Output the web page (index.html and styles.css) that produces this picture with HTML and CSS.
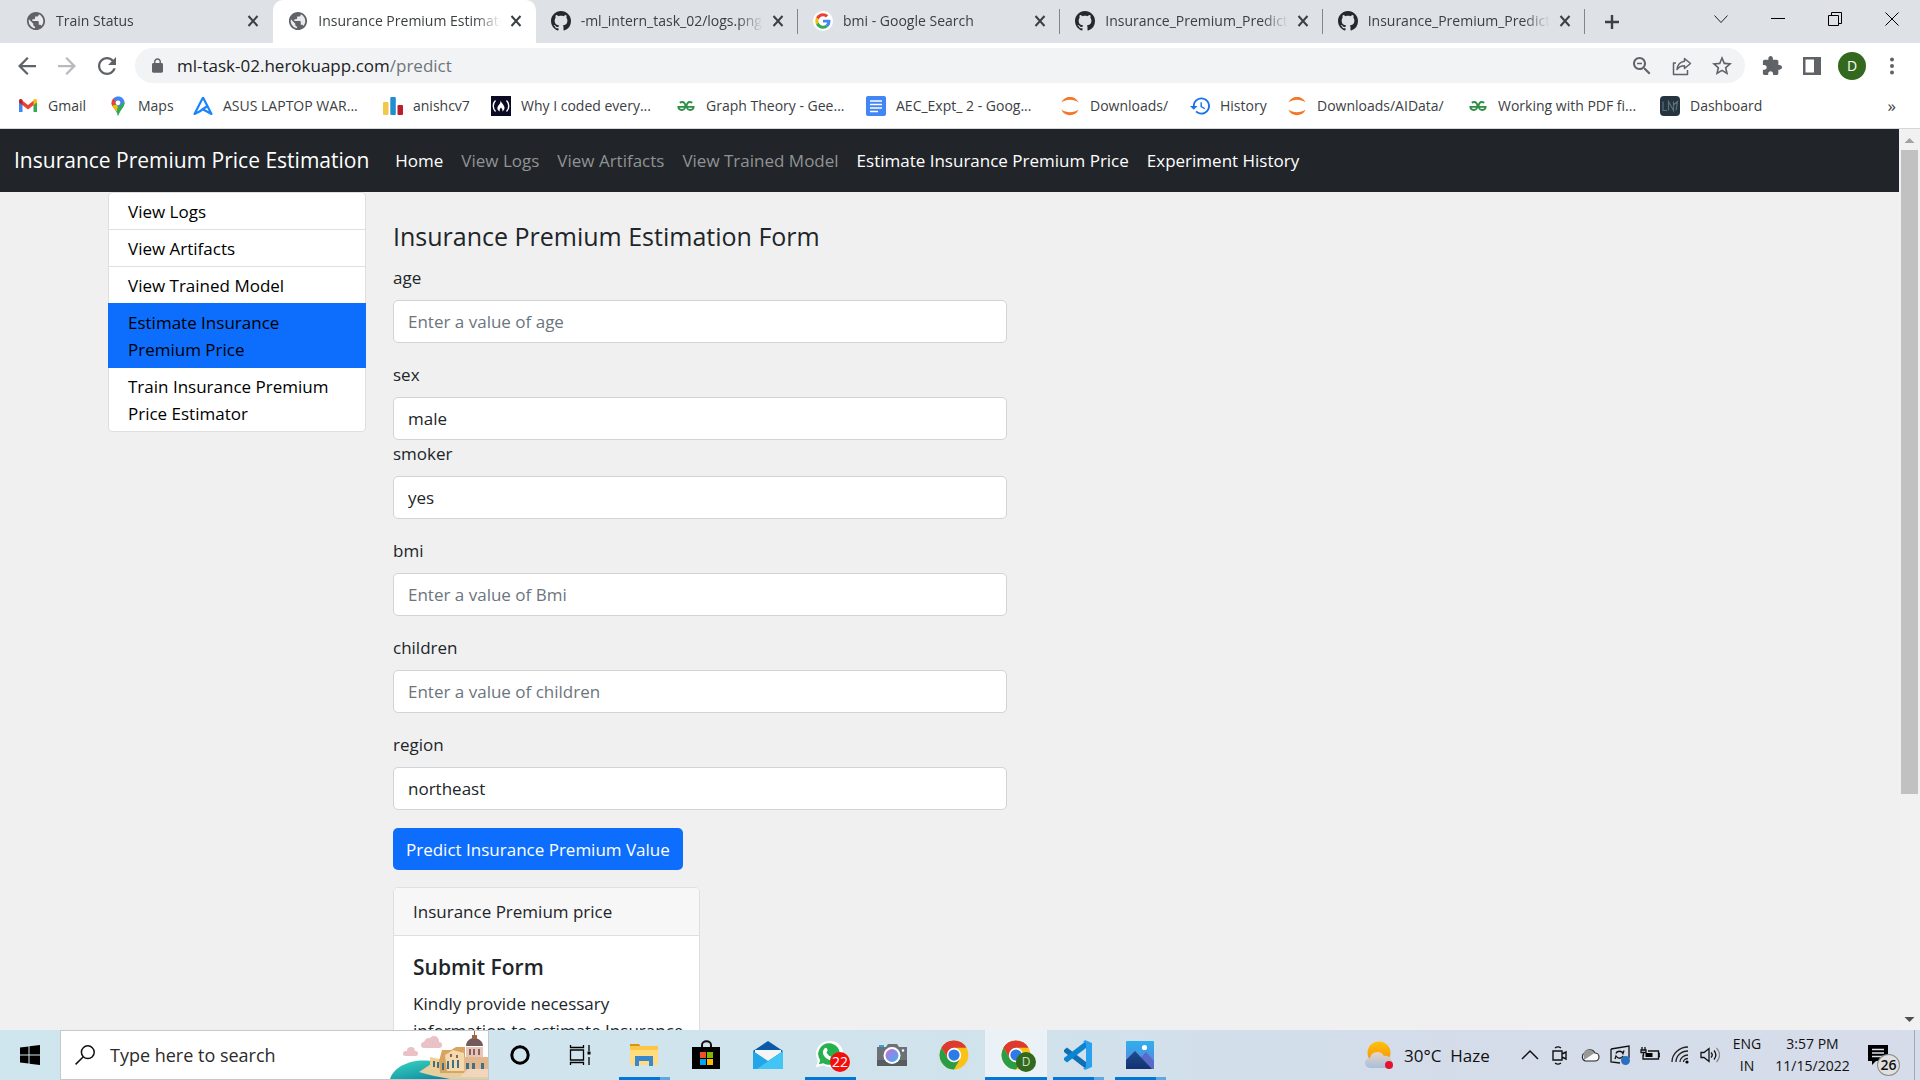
FILE: index.html
```html
<!DOCTYPE html>
<html lang="en">
<head>
<meta charset="utf-8">
<title>Insurance Premium Estimation</title>
<link rel="stylesheet" href="styles.css">
</head>
<body>
<svg class="sprite" aria-hidden="true">
  <defs>
    <linearGradient id="g-sun" x1="0" y1="0" x2="0" y2="1"><stop offset="0" stop-color="#ffc20a"/><stop offset="1" stop-color="#f58a0b"/></linearGradient>
    <linearGradient id="g-cloud" x1="0" y1="0" x2="0" y2="1"><stop offset="0" stop-color="#e9d3c4"/><stop offset="1" stop-color="#a9bfdc"/></linearGradient>
    <linearGradient id="g-lens" x1="0" y1="0" x2="1" y2="1"><stop offset="0" stop-color="#c86be0"/><stop offset="1" stop-color="#3cb4ef"/></linearGradient>
    <linearGradient id="g-sea" x1="0" y1="0" x2="1" y2="1"><stop offset="0" stop-color="#3ad6c0"/><stop offset=".6" stop-color="#1a9eaa"/><stop offset="1" stop-color="#0b5f95"/></linearGradient>
    <linearGradient id="g-photo" x1="0" y1="0" x2="0" y2="1"><stop offset="0" stop-color="#2cb1ee"/><stop offset="1" stop-color="#6a7bd6"/></linearGradient>
    <linearGradient id="g-hill" x1="0" y1="0" x2="0" y2="1"><stop offset="0" stop-color="#1a4f90"/><stop offset="1" stop-color="#163070"/></linearGradient>
  </defs>
  <symbol id="i-globe" viewBox="1 1 22 22"><circle cx="12" cy="12" r="9" fill="#e8eaed"/><path fill="#5f6368" d="M12 2C6.48 2 2 6.48 2 12s4.48 10 10 10 10-4.48 10-10S17.52 2 12 2zm-1 17.93c-3.95-.49-7-3.85-7-7.93 0-.62.08-1.21.21-1.79L9 15v1c0 1.1.9 2 2 2v1.93zm6.900-2.54c-.26-.81-1-1.39-1.900-1.390h-1v-3c0-.55-.45-1-1-1H8v-2h2c.55 0 1-.45 1-1V7h2c1.100 0 2-.9 2-2v-.41c2.930 1.190 5 4.060 5 7.410 0 2.080-.8 3.970-2.100 5.390z"/></symbol>
  <symbol id="i-github" viewBox="0 0 16 16"><path fill="#24292f" d="M8 0C3.58 0 0 3.58 0 8c0 3.54 2.29 6.53 5.47 7.59.4.07.55-.17.55-.38 0-.19-.01-.82-.01-1.49-2.01.37-2.53-.49-2.69-.94-.09-.23-.48-.94-.82-1.13-.28-.15-.68-.52-.01-.53.63-.01 1.08.58 1.23.82.72 1.21 1.87.87 2.33.66.07-.52.28-.87.51-1.07-1.78-.2-3.64-.89-3.64-3.95 0-.87.31-1.59.82-2.15-.08-.2-.36-1.02.08-2.12 0 0 .67-.21 2.2.82.64-.18 1.32-.27 2-.27s1.36.09 2 .27c1.53-1.04 2.2-.82 2.2-.82.44 1.1.16 1.92.08 2.12.51.56.82 1.27.82 2.15 0 3.07-1.87 3.75-3.65 3.95.29.25.54.73.54 1.48 0 1.07-.01 1.93-.01 2.2 0 .21.15.46.55.38A8.01 8.01 0 0016 8c0-4.42-3.58-8-8-8z"/></symbol>
  <symbol id="i-google" viewBox="-7 -7 62 62"><circle cx="24" cy="24" r="31" fill="#fff"/><path fill="#EA4335" d="M24 9.5c3.54 0 6.71 1.22 9.21 3.6l6.85-6.85C35.900 2.380 30.470 0 24 0 14.620 0 6.510 5.380 2.560 13.220l7.980 6.190C12.430 13.720 17.740 9.500 24 9.500z"/><path fill="#4285F4" d="M46.980 24.550c0-1.570-.15-3.090-.38-4.550H24v9.020h12.940c-.58 2.960-2.260 5.480-4.780 7.180l7.730 6c4.510-4.180 7.090-10.360 7.090-17.650z"/><path fill="#FBBC05" d="M10.530 28.590c-.48-1.450-.76-2.990-.76-4.590s.27-3.140.76-4.590l-7.980-6.190C.92 16.460 0 20.120 0 24c0 3.880.92 7.540 2.560 10.780l7.970-6.190z"/><path fill="#34A853" d="M24 48c6.480 0 11.930-2.130 15.890-5.810l-7.730-6c-2.150 1.450-4.920 2.300-8.160 2.300-6.260 0-11.570-4.220-13.470-9.910l-7.980 6.190C6.510 42.620 14.620 48 24 48z"/></symbol>
  <symbol id="i-x" viewBox="0 0 12 12"><path d="M1.500 1l9 10M10.500 1l-9 10" stroke="#3c4043" stroke-width="2" fill="none"/></symbol>
  <symbol id="i-back" viewBox="4 4 16 16"><path fill="currentColor" d="M20 11H7.830l5.590-5.590L12 4l-8 8 8 8 1.410-1.410L7.830 13H20v-2z"/></symbol>
  <symbol id="i-jupyter" viewBox="0 0 20 20"><path fill="#f37726" d="M1.500 6.500C4-1 16-1 18.500 6.500 14 2.800 6 2.800 1.500 6.500zM1.500 13.500C4 21 16 21 18.500 13.500 14 17.200 6 17.200 1.500 13.500z"/></symbol>
  <symbol id="i-gfg" viewBox="0 0 20 12"><path fill="none" stroke="#2f8d46" stroke-width="2" d="M3 2.500c5-3 7 2 6 5-1 4-7 4-7.500-.5h17c-.5 4.500-6.500 4.500-7.500.5-1-3 1-8 6-5"/></symbol>
  <symbol id="i-chrome" viewBox="0 0 48 48"><circle cx="24" cy="24" r="23" fill="#fbc116"/><path fill="#dd3b2e" d="M4.080 12.500A23 23 0 0 1 43.920 12.500H24L14 30z"/><path fill="#2a9e47" d="M4.080 12.500A23 23 0 0 0 24 47l10-17.250A11.500 11.500 0 0 1 14 29.750z"/><path fill="#dd3b2e" d="M24 12.500h20H24a11.500 11.500 0 0 0-10 5.750L4.080 12.500A23 23 0 0 1 24 1z"/><circle cx="24" cy="24" r="11.500" fill="#fff"/><circle cx="24" cy="24" r="9" fill="#2d7be8"/></symbol>
</svg>

<div class="screen">
  <header class="browser">
    <div class="tabstrip">
      <div class="tabs" role="tablist">
        <div class="tab" role="tab"><svg class="favicon"><use href="#i-globe"/></svg><span class="tab-title">Train Status</span><button class="tab-close" aria-label="Close tab"><svg><use href="#i-x"/></svg></button></div>
        <div class="tab active" role="tab" aria-selected="true"><svg class="favicon"><use href="#i-globe"/></svg><span class="tab-title">Insurance Premium Estimation</span><button class="tab-close" aria-label="Close tab"><svg><use href="#i-x"/></svg></button></div>
        <div class="tab divided" role="tab"><svg class="favicon"><use href="#i-github"/></svg><span class="tab-title">-ml_intern_task_02/logs.png at main</span><button class="tab-close" aria-label="Close tab"><svg><use href="#i-x"/></svg></button></div>
        <div class="tab divided" role="tab"><svg class="favicon"><use href="#i-google"/></svg><span class="tab-title">bmi - Google Search</span><button class="tab-close" aria-label="Close tab"><svg><use href="#i-x"/></svg></button></div>
        <div class="tab divided" role="tab"><svg class="favicon"><use href="#i-github"/></svg><span class="tab-title">Insurance_Premium_Prediction</span><button class="tab-close" aria-label="Close tab"><svg><use href="#i-x"/></svg></button></div>
        <div class="tab divided" role="tab"><svg class="favicon"><use href="#i-github"/></svg><span class="tab-title">Insurance_Premium_Prediction</span><button class="tab-close" aria-label="Close tab"><svg><use href="#i-x"/></svg></button></div>
      </div>
      <button class="new-tab" aria-label="New tab"><svg viewBox="0 0 16 16"><path d="M8 1v14M1 8h14" stroke="#3c4043" stroke-width="2.400"/></svg></button>
      <div class="window-controls">
        <button aria-label="Search tabs"><svg viewBox="0 0 14 14"><path d="M.5 3.500l6.500 7 6.500-7" fill="none" stroke="#222"/></svg></button>
        <button aria-label="Minimize"><svg viewBox="0 0 14 14"><path d="M0 6.500h14" stroke="#000"/></svg></button>
        <button aria-label="Restore"><svg viewBox="0 0 14 14"><path d="M.5 3.500h10v10H.5zM3.500 3V.5h10v11h-3" fill="none" stroke="#000"/></svg></button>
        <button aria-label="Close"><svg viewBox="0 0 14 14"><path d="M.5.5l13 13M13.500.5l-13 13" stroke="#000"/></svg></button>
      </div>
    </div>

    <div class="toolbar">
      <div class="nav-buttons">
        <button aria-label="Back"><svg viewBox="0 0 16 16"><use href="#i-back"/></svg></button>
        <button class="forward" aria-label="Forward" disabled><svg viewBox="0 0 16 16"><g transform="translate(16 0) scale(-1 1)"><use href="#i-back" width="16" height="16"/></g></svg></button>
        <button aria-label="Reload"><svg viewBox="4 4 16 16"><path fill="currentColor" d="M17.650 6.350C16.200 4.900 14.210 4 12 4c-4.420 0-7.990 3.580-7.990 8s3.570 8 7.990 8c3.730 0 6.840-2.550 7.730-6h-2.080c-.82 2.330-3.040 4-5.650 4-3.310 0-6-2.690-6-6s2.690-6 6-6c1.660 0 3.140.69 4.220 1.780L13 11h7V4l-2.350 2.350z"/></svg></button>
      </div>
      <div class="omnibox">
        <svg class="lock" viewBox="4 1 16 21"><path fill="#5f6368" d="M18 8h-1V6c0-2.760-2.240-5-5-5S7 3.240 7 6v2H6c-1.100 0-2 .9-2 2v10c0 1.100.9 2 2 2h12c1.100 0 2-.9 2-2V10c0-1.100-.9-2-2-2zM9 6c0-1.660 1.340-3 3-3s3 1.340 3 3v2H9V6z"/></svg>
        <div class="url" role="textbox" aria-label="Address and search bar" contenteditable="true" spellcheck="false">ml-task-02.herokuapp.com<span>/predict</span></div>
        <div class="omni-actions">
          <button aria-label="Zoom"><svg viewBox="2 2 20 20"><path fill="#5f6368" d="M15.500 14h-.79l-.28-.27C15.410 12.590 16 11.110 16 9.500 16 5.910 13.090 3 9.500 3S3 5.910 3 9.500 5.910 16 9.500 16c1.610 0 3.090-.59 4.230-1.570l.27.28v.79l5 4.990L20.490 19l-4.990-5zm-6 0C7.010 14 5 11.990 5 9.500S7.010 5 9.500 5 14 7.010 14 9.500 11.990 14 9.500 14zM7 8.800h5v1.400H7z"/></svg></button>
          <button aria-label="Share"><svg viewBox="0 0 20 20"><path fill="none" stroke="#5f6368" stroke-width="1.500" stroke-linejoin="round" d="M4 7H1.500v11.500h14V14M12.500 2.500l6 5-6 5V9.800c-3.500 0-5.500 1-7.500 3.700.6-4.800 3-7.600 7.500-8.200z"/></svg></button>
          <button aria-label="Bookmark this tab"><svg viewBox="2 2 20 20"><path fill="#5f6368" d="M22 9.240l-7.190-.62L12 2 9.190 8.630 2 9.240l5.460 4.730L5.820 21 12 17.270 18.180 21l-1.630-7.030L22 9.240zM12 15.400l-3.760 2.270 1-4.280-3.320-2.880 4.380-.38L12 6.100l1.710 4.040 4.380.38-3.320 2.880 1 4.280L12 15.400z"/></svg></button>
        </div>
      </div>
      <div class="tool-actions">
        <button aria-label="Extensions"><svg viewBox="1 1 22 22"><path fill="#5f6368" d="M20.500 11H19V7c0-1.100-.9-2-2-2h-4V3.500C13 2.120 11.880 1 10.500 1S8 2.120 8 3.500V5H4c-1.100 0-1.990.9-1.990 2v3.800H3.500c1.490 0 2.700 1.210 2.700 2.700s-1.210 2.700-2.700 2.700H2V20c0 1.100.9 2 2 2h3.800v-1.500c0-1.490 1.210-2.700 2.700-2.700 1.490 0 2.700 1.210 2.700 2.700V22H17c1.100 0 2-.9 2-2v-4h1.500c1.380 0 2.500-1.120 2.500-2.500S21.880 11 20.500 11z"/></svg></button>
        <button aria-label="Side panel"><svg viewBox="0 0 20 20"><path fill="#5f6368" fill-rule="evenodd" d="M1 1h18v18H1zM3.500 3.500v13H12v-13z"/></svg></button>
        <button class="avatar" aria-label="Profile">D</button>
        <button aria-label="Menu"><svg viewBox="0 0 20 20"><g fill="#5f6368"><circle cx="10" cy="3.500" r="2"/><circle cx="10" cy="10" r="2"/><circle cx="10" cy="16.500" r="2"/></g></svg></button>
      </div>
    </div>

    <nav class="bookmarks" aria-label="Bookmarks">
      <a href="#"><svg viewBox="0 0 20 20"><path fill="#4285f4" d="M1 5v11h3.500V8z"/><path fill="#34a853" d="M15.500 8v8H19V5z"/><path fill="#ea4335" d="M3 3.500l7 5.500 7-5.500V8l-7 5.500L3 8z"/><path fill="#c5221f" d="M1 5c0-2 2-2.500 3.500-1.200V9L1 6.500z"/><path fill="#fbbc04" d="M19 5c0-2-2-2.500-3.500-1.200V9L19 6.500z"/></svg>Gmail</a>
      <a href="#"><svg viewBox="0 0 20 20"><path fill="#34a853" d="M3.500 7c0 4 5 6.500 6.500 13C11.500 14 16.500 11 16.500 7z"/><path fill="#fbbc04" d="M4 9c1 2.500 3 4 4.500 6.500L14 9z"/><path fill="#ea4335" d="M3.500 7c0-2 .8-3.700 2-4.800L10 6 4.300 10z"/><path fill="#4285f4" d="M5.500 2.200C9 -1 15.500 0 16.500 6L10 13 9 7z"/><path fill="#34a853" d="M16.400 5.500c.8 5-4 8-6.400 14.500L9 13z"/><circle cx="10" cy="6.800" r="2.400" fill="#fff"/></svg>Maps</a>
      <a href="#"><svg viewBox="0 0 20 20"><path fill="none" stroke="#1a84ff" stroke-width="2.200" stroke-linejoin="round" d="M10 1.500L1.500 18l5-2.500 8-5.500M10 1.500L18.500 18l-5.500-3-4-2"/></svg>ASUS LAPTOP WAR...</a>
      <a href="#"><svg viewBox="0 0 20 20"><rect y="6" width="5.500" height="13" rx="1" fill="#f2c84b"/><rect x="7.300" y="1" width="5.500" height="18" rx="1" fill="#1f8fce"/><rect x="14.500" y="9" width="5.500" height="10" rx="1" fill="#bb1f2d"/></svg>anishcv7</a>
      <a href="#"><svg viewBox="0 0 20 20"><path fill="#0a0a23" d="M0 0h20v20H0z"/><path fill="none" stroke="#fff" stroke-width="1.400" d="M4.500 4.500c-3 3-3 8 0 11M15.500 4.500c3 3 3 8 0 11"/><path fill="#fff" d="M9.500 4.500c1.500 3.500 4 4.500 4 7.500 0 2-1.300 3-2.300 3.500 1-2-.4-2.500-1.200-4-.8 1-2 2.300-1 4C5.500 14 6 11 7.800 9c1.200-1.400 1.900-2.700 1.700-4.500z"/></svg>Why I coded every...</a>
      <a href="#"><svg viewBox="0 0 20 20"><use href="#i-gfg" x="1" y="4" width="18" height="12"/></svg>Graph Theory - Gee...</a>
      <a href="#"><svg viewBox="0 0 20 20"><rect width="20" height="20" rx="2" fill="#4285f4"/><path stroke="#fff" stroke-width="1.600" d="M4 5h12M4 8.500h12M4 12h12M4 15.500h8"/></svg>AEC_Expt_ 2 - Goog...</a>
      <a href="#"><svg viewBox="0 0 20 20"><use href="#i-jupyter"/></svg>Downloads/</a>
      <a href="#"><svg viewBox="1 2 21 20"><path fill="#1a73e8" d="M13 3c-4.970 0-9 4.030-9 9H1l3.890 3.890.07.14L9 12H6c0-3.870 3.130-7 7-7s7 3.130 7 7-3.130 7-7 7c-1.930 0-3.680-.79-4.940-2.060l-1.420 1.420C8.270 19.990 10.510 21 13 21c4.970 0 9-4.030 9-9s-4.030-9-9-9zm-1 5v5l4.280 2.540.72-1.210-3.500-2.080V8H12z"/></svg>History</a>
      <a href="#"><svg viewBox="0 0 20 20"><use href="#i-jupyter"/></svg>Downloads/AIData/</a>
      <a href="#"><svg viewBox="0 0 20 20"><use href="#i-gfg" x="1" y="4" width="18" height="12"/></svg>Working with PDF fi...</a>
      <a href="#"><svg viewBox="0 0 20 20"><rect width="20" height="20" rx="4" fill="#25343f"/><path fill="none" stroke="#5c707d" stroke-width="1.200" d="M3 5.500v9h4M8.500 14.500v-9l5 9v-9M13.500 9l4-3.500-1.500 9"/></svg>Dashboard</a>
      <button class="overflow" aria-label="More bookmarks">»</button>
    </nav>
  </header>

  <div class="viewport">
    <div class="page">
      <nav class="navbar">
        <a class="brand" href="#">Insurance Premium Price Estimation</a>
        <a class="on" href="#">Home</a>
        <a href="#">View Logs</a>
        <a href="#">View Artifacts</a>
        <a href="#">View Trained Model</a>
        <a class="on" href="#">Estimate Insurance Premium Price</a>
        <a class="on" href="#">Experiment History</a>
      </nav>
      <div class="container">
        <aside class="list">
          <a href="#">View Logs</a>
          <a href="#">View Artifacts</a>
          <a href="#">View Trained Model</a>
          <a class="current" href="#">Estimate Insurance Premium Price</a>
          <a href="#">Train Insurance Premium Price Estimator</a>
        </aside>
        <main class="content">
          <h1>Insurance Premium Estimation Form</h1>
          <form>
            <div class="field"><label for="age">age</label><input id="age" type="text" placeholder="Enter a value of age"></div>
            <div class="field tight"><label for="sex">sex</label><select id="sex"><option>male</option><option>female</option></select></div>
            <div class="field"><label for="smoker">smoker</label><select id="smoker"><option>yes</option><option>no</option></select></div>
            <div class="field"><label for="bmi">bmi</label><input id="bmi" type="text" placeholder="Enter a value of Bmi"></div>
            <div class="field"><label for="children">children</label><input id="children" type="text" placeholder="Enter a value of children"></div>
            <div class="field"><label for="region">region</label><select id="region"><option>northeast</option><option>northwest</option><option>southeast</option><option>southwest</option></select></div>
            <button class="submit" type="submit">Predict Insurance Premium Value</button>
          </form>
          <section class="card">
            <div class="card-header">Insurance Premium price</div>
            <div class="card-body">
              <h2>Submit Form</h2>
              <p>Kindly provide necessary information to estimate Insurance Premium price.</p>
            </div>
          </section>
        </main>
      </div>
    </div>
    <div class="scrollbar" aria-hidden="true">
      <svg viewBox="0 0 21 21"><path fill="#a3a3a3" d="M10.500 9l5 5h-10z"/></svg>
      <div class="track"><div class="thumb"></div></div>
      <svg viewBox="0 0 21 21"><path fill="#505050" d="M10.500 13l5-5h-10z"/></svg>
    </div>
  </div>

  <footer class="taskbar">
    <button class="start" aria-label="Start"><svg viewBox="0 0 20 20"><path d="M0 2.600l8.500-1.200v8.100H0zM9.500 1.300L20 0v9.500H9.500zM0 10.500h8.500v8.100L0 17.400zM9.500 10.500H20V20L9.500 18.700z"/></svg></button>
    <div class="search">
      <svg class="glass" viewBox="0 0 20 20"><circle cx="12.800" cy="7.200" r="6.400" fill="none" stroke="#111" stroke-width="1.500"/><path d="M8.300 11.700L.6 19.400" stroke="#111" stroke-width="1.500"/></svg>
      <input type="text" aria-label="Type here to search" placeholder="Type here to search">
      <svg class="scene" viewBox="0 0 98 48">
        <g fill="#e9c1c6"><circle cx="39" cy="12" r="5"/><circle cx="44" cy="10" r="5"/><rect x="31" y="11" width="21" height="6" rx="3"/><circle cx="21" cy="20" r="4"/><rect x="13" y="20" width="15" height="5" rx="2.500"/></g>
        <path fill="url(#g-sea)" d="M0 48C4 34 26 26 45 31l40 12v5z"/>
        <path fill="#e5cf9f" d="M29 41l12-8 57 4v11H60c-10-2-22-4-31-7z"/>
        <path fill="#efd08e" d="M40 38V26l14 3v11z"/>
        <path fill="#d9a45f" d="M49 30l3-11h9l5-3h9v26H50z"/>
        <path fill="#f4d9ac" d="M55 24l8-5 11 3v18H57z"/>
        <path fill="#e8c6b7" d="M76 16h17v27H76z"/><path fill="#e2b78d" d="M74 26h24v16H74z"/><path fill="#f0d6bc" d="M78 38h20v8H70z"/>
        <path fill="#735b5b" d="M76 15c0-5 4-8 8-8s9 3 9 8z"/><path fill="#9a654a" d="M82 4h5v4h-5zM84 0h1v5h-1z"/>
        <g fill="#3d718a"><path d="M43 30h2v6h-2zM47 31h2v6h-2zM52 32h2v7h-2zM57 30h2v8h-2zM62 29h2v8h-2zM67 29h2v8h-2zM76 32h3v6h-3zM82 32h3v6h-3zM91 32h3v6h-3z"/></g>
        <g fill="#8a5f5f"><path d="M79 18h2v6h-2zM83 18h2v6h-2zM88 18h2v6h-2zM60 23h2v3h-2zM66 24h2v3h-2z"/></g>
      </svg>
    </div>
    <div class="apps">
      <button aria-label="Cortana"><svg viewBox="0 0 30 30"><circle cx="15" cy="15" r="8.200" fill="none" stroke="#000" stroke-width="3"/></svg></button>
      <button aria-label="Task View"><svg viewBox="0 0 30 30"><path fill="none" stroke="#000" stroke-width="1.300" d="M3.500 10h13v10h-13zM3.500 5v2.500h13V5M3.500 25v-2.500h13V25M22 5v6M22 17v8"/><path d="M20.500 11.500h3v3h-3z"/></svg></button>
      <button class="running stacked" aria-label="File Explorer"><svg viewBox="0 0 30 30"><path fill="#d9940f" d="M1 4h9l2 3H1z"/><path fill="#fbc745" d="M1 6h28v19H1z"/><path fill="#ffdc7e" d="M1 10h28v15H1z"/><path fill="#3a86cf" d="M6 16h18v10h-4v-5H10v5H6z"/></svg></button>
      <button aria-label="Microsoft Store"><svg viewBox="0 0 30 30"><path fill="none" stroke="#111" stroke-width="2" d="M11 9V5c0-5 9-5 9 0v4"/><path fill="#000" d="M1 7h28v22H1z"/><path fill="#f25022" d="M9 12h6v6H9z"/><path fill="#7fba00" d="M16 12h6v6h-6z"/><path fill="#00a4ef" d="M9 19h6v6H9z"/><path fill="#ffb900" d="M16 19h6v6h-6z"/></svg></button>
      <button aria-label="Mail"><svg viewBox="0 0 30 30"><path fill="#0a5aa8" d="M0 11L15 1l15 10-3 5H3z"/><path fill="#f5f5f5" d="M2 10h26v3L15 21 2 14z"/><path fill="#22a6e8" d="M0 11l15 10 15-10v18H0z"/><path fill="#42c4f5" d="M30 11L4 29h26z"/></svg></button>
      <button class="running" aria-label="WhatsApp"><svg viewBox="0 0 32 32"><path fill="#fff" d="M15 1a14 14 0 0 0-12 21L1 29l8-2A14 14 0 1 0 15 1z"/><path fill="#25b14c" d="M15 3.500A11.500 11.500 0 0 0 5.500 21.500l-1.300 4.400 4.600-1.200A11.500 11.500 0 1 0 15 3.500z"/><path fill="#fff" d="M10 9c2-2 3 0 3.500 2 0 1-1.500 1.500-1 2.500 1 2 2.500 3.500 4.500 4l-1 4c-6-2-10-8-6-12.500z"/></svg><span class="count">22</span></button>
      <button aria-label="Camera"><svg viewBox="0 0 30 30"><path fill="#2ea3df" d="M2 5h5v3H2z"/><path fill="#6b7177" d="M0 7h9l2-3h9l2 3h8v19H0z"/><path fill="#575c61" d="M0 20h30v6H0z"/><circle cx="15" cy="15.500" r="8.500" fill="#fff"/><circle cx="15" cy="15.500" r="6.500" fill="url(#g-lens)"/><circle cx="26" cy="10.500" r="1.200" fill="#fff"/></svg></button>
      <button aria-label="Google Chrome"><svg><use href="#i-chrome"/></svg></button>
      <button class="running focused" aria-label="Google Chrome, profile D"><svg><use href="#i-chrome"/></svg><span class="count profile">D</span></button>
      <button class="running stacked" aria-label="Visual Studio Code"><svg viewBox="0 0 30 30"><path fill="#0f6fb4" d="M1 10l3-2.500L23 22v7L1 12z"/><path fill="#0b85cf" d="M1 20l3 2.500L23 8V1L1 18z"/><path fill="#2ba0ee" d="M22 0l7 3v24l-7 3-2-2 3-1V3l-3-1z"/></svg></button>
      <button class="running stacked" aria-label="Photos"><svg viewBox="0 0 30 30"><rect x="1" y="1" width="28" height="28" rx="1" fill="url(#g-photo)"/><path fill="#5b6ac9" d="M14 20l7-8 8 9v8H14z"/><path fill="url(#g-hill)" d="M1 20l9-9 17 18H1z"/><circle cx="19.500" cy="7.500" r="2.600" fill="#fff"/></svg></button>
    </div>
    <div class="tray">
      <button class="weather"><svg viewBox="0 0 28 28"><circle cx="14" cy="12" r="11.500" fill="url(#g-sun)"/><path fill="url(#g-cloud)" d="M5 27a5 5 0 0 1 0-10 7.500 7.500 0 0 1 14-2 6 6 0 0 1 3 12z"/><circle cx="24" cy="24" r="4" fill="#e5112f"/></svg>30°C&nbsp; Haze</button>
      <div class="tray-icons">
        <button aria-label="Show hidden icons"><svg viewBox="0 0 20 20"><path fill="none" stroke="#111" stroke-width="1.500" d="M2 14l8-8 8 8"/></svg></button>
        <button aria-label="Meet Now"><svg viewBox="0 0 20 20"><path fill="none" stroke="#111" stroke-width="1.400" d="M3 6h9v9H3zM12 9l4-2v7l-4-2M5 3c2-1.500 4-1.500 6 0M5 18c2 1.500 4 1.500 6 0"/></svg></button>
        <button aria-label="OneDrive"><svg viewBox="0 0 20 20"><path fill="#fafafa" stroke="#222" stroke-width="1.100" d="M5 16a4.500 4.500 0 0 1-.5-8A6 6 0 0 1 15 8a4 4 0 0 1 0 8z"/><path fill="#989898" d="M3.500 8.500A6 6 0 0 1 14.500 8L4 15z"/></svg></button>
        <button aria-label="Update status"><svg viewBox="0 0 20 20"><path fill="none" stroke="#111" stroke-width="1.300" d="M1 4l18-3v12M1 4v13l9 1M6 8.500c1-3 6-3 7 0l1-3M13 11c-1 3-5 3-7 0l-1 3"/><circle cx="15.500" cy="15.500" r="4.500" fill="#2b6fbf"/></svg></button>
        <button aria-label="Battery"><svg viewBox="0 0 20 20"><path fill="none" stroke="#111" stroke-width="1.300" d="M3 9.500V14h15.500V6H8M18.500 8.500H20v3h-1.500M2 2v3M5 2v3M1 5h5v2.500H1zM3.500 7.500v4"/><path d="M5.500 8h7v4h-7z"/></svg></button>
        <button aria-label="Network"><svg viewBox="0 0 20 20"><path fill="none" stroke="#222" stroke-width="1.300" d="M2 17C2 9 9 2 18 2M6 17C6 11 11 6 18 6M10 17c0-4 4-7 8-7"/><path fill="none" stroke="#222" stroke-width="1.300" d="M13.500 17c0-2 2-3.500 4.500-3.500"/><circle cx="17" cy="17" r="1.600"/></svg></button>
        <button aria-label="Volume"><svg viewBox="0 0 20 20"><path fill="none" stroke="#111" stroke-width="1.300" d="M1 7.500h3l5-4v13l-5-4H1zM11 7.500c1.500 1.500 1.500 3.500 0 5M14 5.500c2.500 3 2.500 6 0 9"/><path fill="none" stroke="#888" stroke-width="1.200" d="M16.500 3c4 4.500 4 9.500 0 14"/></svg></button>
      </div>
      <button class="stack lang"><span>ENG</span><span>IN</span></button>
      <button class="stack clock"><span>3:57 PM</span><span>11/15/2022</span></button>
      <button class="notes" aria-label="Notifications"><svg viewBox="0 0 20 20"><path d="M0 0h20v16H8l-4 4v-4H0z"/><path stroke="#dde3ee" stroke-width="1.600" d="M4 4.500h12M4 8h12M4 11.500h12"/></svg><span class="note-count">26</span></button>
      <div class="peek"></div>
    </div>
  </footer>
</div>
</body>
</html>
```
FILE: styles.css
```css
* { box-sizing: border-box; }

body {
  margin: 0;
  font-family: "Open Sans", "Noto Sans", sans-serif;
  font-size: 17px;
  line-height: 27px;
  color: #212529;
}

button, input, select { font: inherit; color: inherit; margin: 0; }
button { border: 0; background: none; padding: 0; }
a { color: inherit; text-decoration: none; }
svg { display: block; flex: none; }
.sprite { position: absolute; width: 0; height: 0; }

.screen { display: flex; flex-direction: column; height: 100vh; overflow: hidden; }

/* Browser chrome */
.browser { flex: none; background: #fff; border-bottom: 1px solid #d5d6d9; color: #3c4043; }

.tabstrip { display: flex; align-items: center; height: 43px; background: #dee1e6; padding-left: 11px; }
.tabs { display: flex; flex: 0 1 1574px; min-width: 0; height: 43px; }
.tab {
  display: flex; align-items: center; flex: 1 1 0; min-width: 0;
  padding: 0 14px 2px 15px; font-size: 14px; line-height: 20px;
}
.tab.active { background: #fff; border-radius: 10px 10px 0 0; }
.tab.divided { background: linear-gradient(#80868b, #80868b) right 9px / 1px 25px no-repeat; }
.favicon { width: 20px; height: 20px; margin-right: 10px; }
.tab-title {
  flex: 1; min-width: 0; overflow: hidden; white-space: nowrap;
  -webkit-mask-image: linear-gradient(to right, #000 calc(100% - 26px), transparent);
  mask-image: linear-gradient(to right, #000 calc(100% - 26px), transparent);
}
.tab-close { margin-left: 9px; }
.tab-close svg { width: 12px; height: 12px; }
.new-tab { margin-left: 19px; }
.new-tab svg { width: 16px; height: 16px; }
.window-controls { display: flex; margin-left: auto; padding-bottom: 6px; }
.window-controls button { width: 57px; display: flex; justify-content: center; }
.window-controls svg { width: 14px; height: 14px; }

.toolbar { display: flex; align-items: center; height: 45px; padding: 0 18px; color: #5f6368; }
.nav-buttons { display: flex; gap: 22px; width: 117px; }
.nav-buttons svg { width: 18px; height: 18px; }
.forward { color: #b8babd; }
.omnibox { display: flex; align-items: center; flex: 1; height: 35px; border-radius: 18px; background: #f1f3f4; padding: 0 13px 0 17px; }
.lock { width: 11px; height: 15px; }
.url { flex: 1; margin-left: 14px; font-size: 17px; color: #202124; outline: 0; }
.url span { color: #70757a; }
.omni-actions { display: flex; gap: 20px; }
.omni-actions svg, .tool-actions svg { width: 20px; height: 20px; }
.tool-actions { display: flex; align-items: center; gap: 16px; margin-left: 17px; }
.tool-actions button:first-child { margin-right: 4px; }
.avatar { width: 28px; height: 28px; border-radius: 50%; background: #33691e; color: #fff; font-size: 14px; line-height: 28px; }
.tool-actions button:last-child { width: 20px; }

.bookmarks {
  display: grid; align-items: center; height: 40px; padding: 0 18px 4px 18px;
  grid-template-columns: 90fr 85fr 190fr 108fr 185fr 190fr 194fr 130fr 97fr 181fr 192fr 207fr 35fr;
  font-size: 14px; line-height: 20px; white-space: nowrap;
}
.bookmarks a { display: flex; align-items: center; gap: 10px; min-width: 0; }
.bookmarks svg { width: 20px; height: 20px; }
.overflow { justify-self: end; margin-right: 6px; font-size: 17px; }

/* Page */
.viewport { display: flex; flex: 1; min-height: 0; background: #f0f0f0; }
.page { flex: 1; min-width: 0; overflow: hidden; }
.navbar { display: flex; align-items: center; height: 63px; padding: 0 14px; gap: 18px; background: #212529; color: #909294; white-space: nowrap; }
.brand { font-size: 21px; color: #fff; margin-right: 8px; }
.navbar .on { color: #fff; }

.container { display: grid; grid-template-columns: 258px minmax(0, 1fr); gap: 27px; padding-left: 108px; }
.list { align-self: start; border: 1px solid #dfdfdf; border-radius: 4px; background: #fff; color: #000; }
.list a { display: block; padding: 5px 18px 4px 19px; border-bottom: 1px solid #dfdfdf; }
.list .current { background: #0d6efd; border-color: #0d6efd; margin: -1px -1px 0; padding: 6px 19px 4px 20px; }
.list a:last-child { border-bottom: 0; }

.content { padding-top: 28px; }
h1 { margin: 0 0 11px; font-size: 25px; line-height: 33px; font-weight: 400; }
.field { display: flex; flex-direction: column; gap: 9px; width: 614px; max-width: 100%; margin-bottom: 18px; }
.field.tight { margin-bottom: 0; }
.field input, .field select {
  height: 43px; padding: 0 14px; border: 1px solid #ced4da; border-radius: 5px;
  background: #fff; appearance: none; outline: 0; width: 100%;
}
.field input::placeholder { color: #6c757d; opacity: 1; }
.submit { display: block; height: 42px; padding: 0 13px; border-radius: 5px; background: #0d6efd; color: #fff; }
.card { width: 307px; margin-top: 17px; border: 1px solid #dfdfdf; border-radius: 5px; background: #fff; overflow: hidden; }
.card-header { padding: 10px 19px; background: #f7f7f7; border-bottom: 1px solid #dfdfdf; }
.card-body { padding: 18px 10px 18px 19px; }
h2 { margin: 0 0 9px; font-size: 21px; line-height: 27px; font-weight: 600; }
p { margin: 0; }

.scrollbar { display: flex; flex-direction: column; width: 21px; background: #f1f1f1; }
.scrollbar svg { width: 21px; height: 21px; }
.track { flex: 1; padding: 0 2px; }
.thumb { height: 75%; background: #c1c1c1; }

/* Taskbar */
.taskbar { display: flex; flex: none; height: 50px; background: linear-gradient(to right, #cfe6ee, #d0e3ed 50%, #d4dcea 75%, #d6dcea); color: #111; }
.start { display: flex; align-items: center; justify-content: center; width: 60px; }
.start svg { width: 20px; height: 20px; }
.search { display: flex; align-items: center; flex: 0 1 429px; min-width: 0; background: #fff; border: 1px solid #c4c9cc; padding-left: 14px; }
.glass { width: 20px; height: 20px; }
.search input { flex: 1; min-width: 0; border: 0; outline: 0; background: none; padding: 0 0 0 15px; font-size: 18px; }
.search input::placeholder { color: #2b2b2b; opacity: 1; }
.scene { width: 98px; height: 48px; }
.apps { display: flex; }
.apps button { position: relative; display: flex; align-items: center; justify-content: center; width: 62px; }
.apps svg { width: 30px; height: 30px; }
.running::after { content: ""; position: absolute; bottom: 0; left: 6px; right: 5px; height: 3px; background: #0078d7; }
.stacked::after { background: linear-gradient(to right, #0078d7 41px, #5fa8e6 41px); }
.apps .focused { background: #eaf2f7; }
.focused::after { left: 0; right: 0; }
.count { position: absolute; right: 11px; bottom: 8px; width: 20px; height: 20px; border-radius: 50%; background: #f60c0c; color: #fff; font-size: 14px; line-height: 20px; }
.count.profile { background: #33691e; color: #cfe0c8; font-size: 12px; }

.tray { display: flex; align-items: center; margin-left: auto; white-space: nowrap; }
.weather { display: flex; align-items: center; gap: 11px; width: 150px; font-size: 17px; }
.weather svg { width: 28px; height: 28px; }
.tray-icons { display: flex; gap: 10px; width: 210px; padding-left: 5px; }
.tray-icons svg { width: 20px; height: 20px; }
.stack { display: flex; flex-direction: column; align-items: center; font-size: 14px; line-height: 22px; }
.lang { width: 44px; }
.clock { width: 83px; margin-left: 2px; }
.notes { position: relative; margin-left: 14px; width: 46px; }
.notes svg { width: 20px; height: 20px; }
.note-count { position: absolute; left: 9px; top: 9px; width: 23px; height: 22px; border: 1px solid #8c8c8c; border-radius: 50%; background: #e0e0e0; font-size: 14px; line-height: 20px; font-weight: 600; }
.peek { width: 6px; height: 50px; border-left: 1px solid #9eacb8; }
```
